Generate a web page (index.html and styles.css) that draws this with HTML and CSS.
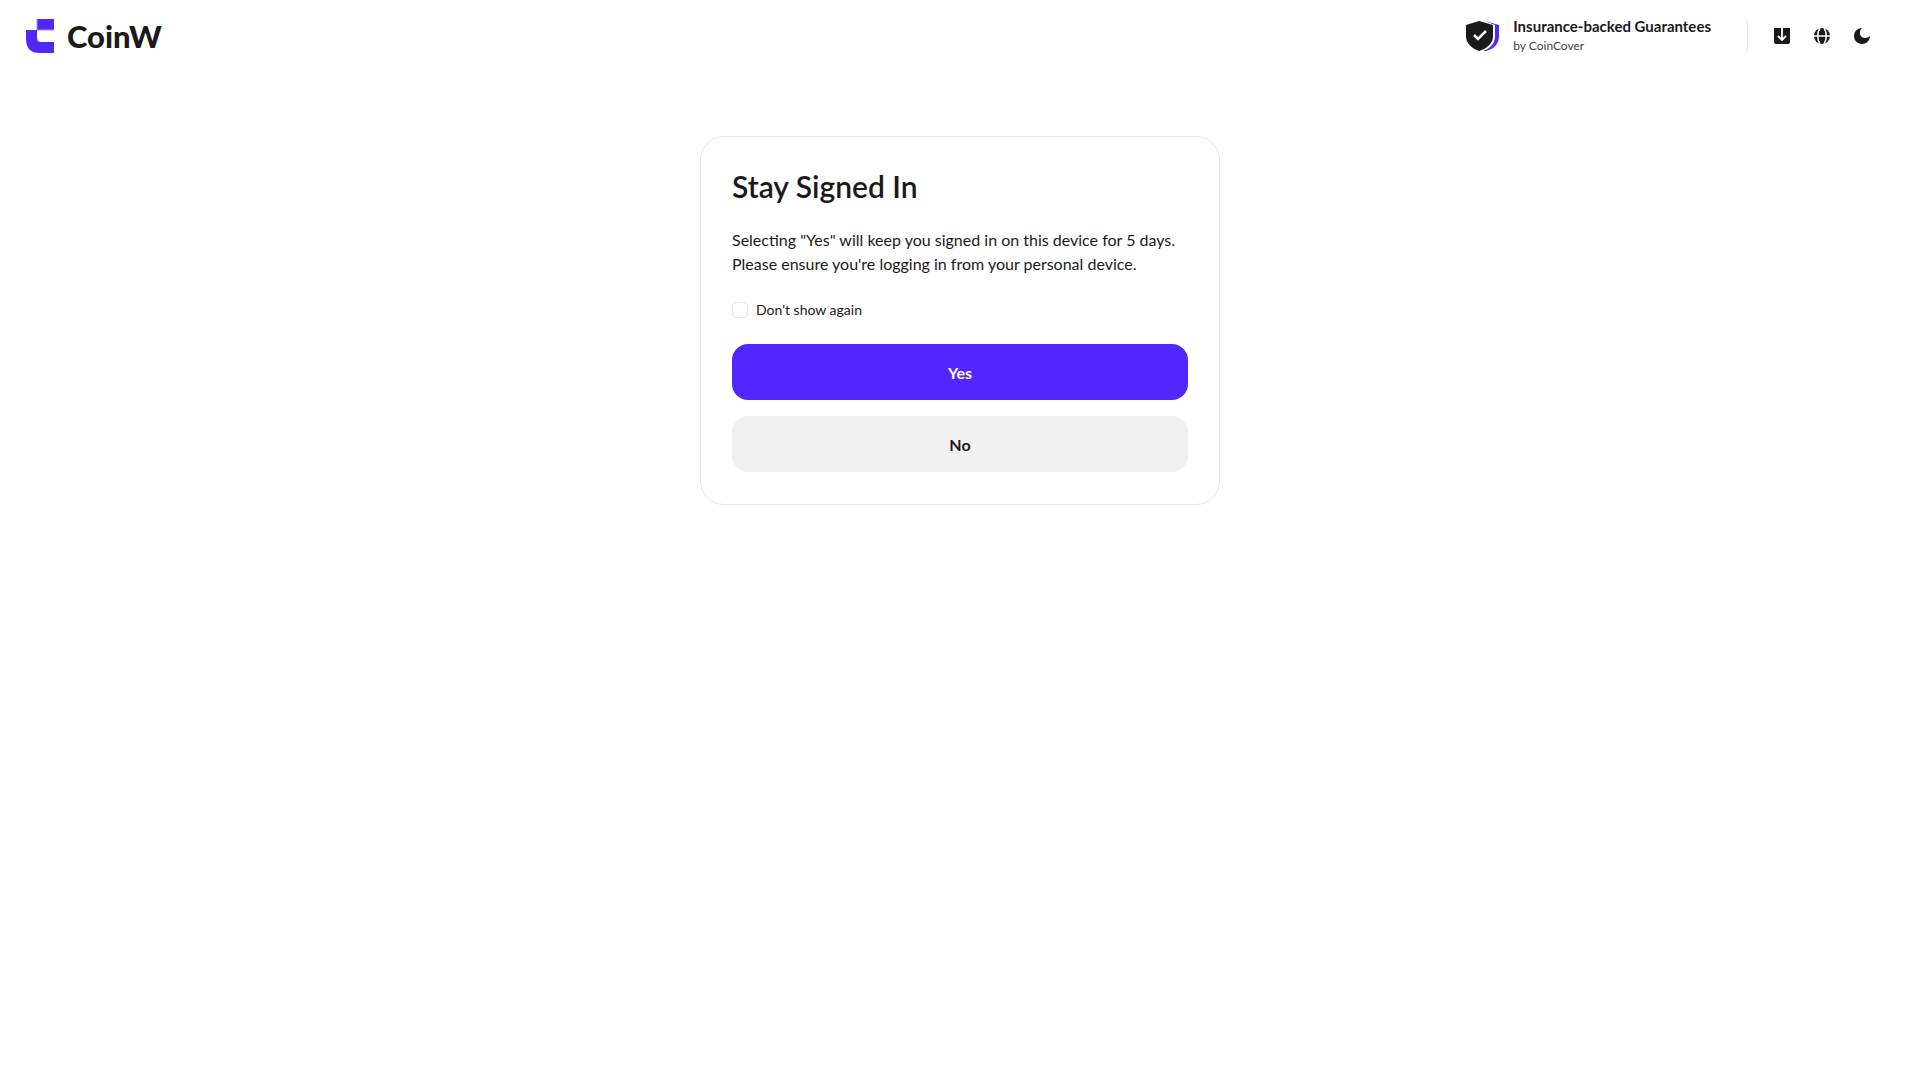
FILE: index.html
```html
<!DOCTYPE html>
<html lang="en">
<head>
    <meta charset="UTF-8">
    <meta name="viewport" content="width=device-width, initial-scale=1.0">
    <title>Stay Signed In | CoinW</title>
    <link rel="stylesheet" href="styles.css">
</head>
<body>
    <header class="header">
        <a href="#" class="logo">
            <svg class="logo-mark" width="28" height="34" viewBox="0 0 28 34" aria-hidden="true">
                <path fill="#5227ff" d="M11 0h17v11H11z"/>
                <path fill="#5227ff" d="M0 11h11v8q0 4 4 4h13v11H14Q0 34 0 20z"/>
                <path stroke="#a48fff" stroke-width="1" fill="none" d="M11 0v11h17"/>
            </svg>
            <span class="logo-text">CoinW</span>
        </a>
        <div class="header-right">
            <a href="#" class="cover">
                <svg width="34" height="32" viewBox="0 0 34 32" aria-hidden="true">
                    <path fill="#5227ff" d="M19 1l14 4v11c0 8-5 13-13 15h-3c8-3 12-8 12-15V5z"/>
                    <path fill="#1a1a1a" d="M13 1l14 4v11c0 7-5 12-14 15C5 28 0 23 0 16V5z"/>
                    <path fill="none" stroke="#fff" stroke-width="2.5" d="M8 15l4 4 8-8"/>
                </svg>
                <span class="cover-text">
                    <span class="cover-title">Insurance-backed Guarantees</span>
                    <span class="cover-sub">by CoinCover</span>
                </span>
            </a>
            <nav class="tools">
                <button type="button" class="tool" aria-label="Download app">
                    <svg width="16" height="16" viewBox="0 0 16 16">
                        <path fill="#1a1a1a" d="M0 0h16v14q0 2-2 2H2q-2 0-2-2z"/>
                        <path fill="none" stroke="#fff" stroke-width="1.8" d="M8 0v12M4 8l4 4 4-4"/>
                    </svg>
                </button>
                <button type="button" class="tool" aria-label="Language">
                    <svg width="16" height="16" viewBox="0 0 16 16">
                        <circle cx="8" cy="8" r="8" fill="#1a1a1a"/>
                        <path fill="none" stroke="#fff" stroke-width="1.5" d="M0 8h16M6 0C3 4 3 12 6 16M10 0c3 4 3 12 0 16"/>
                    </svg>
                </button>
                <button type="button" class="tool" aria-label="Dark mode">
                    <svg width="16" height="16" viewBox="0 0 16 16">
                        <path fill="#1a1a1a" d="M8 0C4 4 6 10 11 10q3 0 5-2C16 12 13 16 8 16S0 12 0 8s3-8 8-8z"/>
                    </svg>
                </button>
            </nav>
        </div>
    </header>

    <main class="main">
        <form class="card">
            <h1>Stay Signed In</h1>
            <p>Selecting "Yes" will keep you signed in on this device for 5 days.<br>
            Please ensure you're logging in from your personal device.</p>
            <label class="remember" for="dontShow">
                <input type="checkbox" id="dontShow">
                Don't show again
            </label>
            <button type="button" class="btn btn-primary">Yes</button>
            <button type="button" class="btn btn-secondary">No</button>
        </form>
    </main>
</body>
</html>
```
FILE: styles.css
```css
* {
    box-sizing: border-box;
}
body {
    margin: 0;
    font-family: Lato, "Liberation Sans", sans-serif;
    color: #1a1a1a;
    background-color: #fff;
}
a {
    color: inherit;
    text-decoration: none;
}
svg {
    display: block;
}
button {
    border: none;
    font-family: inherit;
    color: inherit;
    cursor: pointer;
}
.header {
    display: flex;
    align-items: center;
    justify-content: space-between;
    height: 72px;
    padding: 0 50px 0 26px;
}
.logo {
    display: flex;
    align-items: center;
    gap: 13px;
}
.logo-text {
    font-size: 31px;
    line-height: 32px;
    font-weight: 900;
}
.header-right {
    display: flex;
    align-items: center;
    gap: 36px;
}
.cover {
    display: flex;
    align-items: center;
    gap: 13px;
}
.cover-text {
    display: flex;
    flex-direction: column;
}
.cover-title {
    font-size: 15px;
    line-height: 20px;
    font-weight: 700;
}
.cover-sub {
    font-size: 12px;
    line-height: 20px;
    color: #444;
}
/* Download, language and theme icons */
.tools {
    display: flex;
    align-items: center;
    gap: 24px;
    height: 32px;
    padding-left: 26px;
    border-left: 1px solid #e6e6e6;
}
.tool {
    padding: 0;
    background: none;
}
.main {
    display: flex;
    justify-content: center;
    padding: 64px 16px;
}
.card {
    display: flex;
    flex-direction: column;
    width: 100%;
    max-width: 520px;
    padding: 31px 31px 32px;
    border: 1px solid #e6e6e6;
    border-radius: 24px;
}
h1 {
    margin: 0 0 24px;
    font-size: 30px;
    line-height: 36px;
    font-weight: 600;
}
p {
    margin: 0 0 24px;
    font-size: 16px;
    line-height: 24px;
}
.remember {
    display: flex;
    align-items: center;
    gap: 8px;
    margin-bottom: 24px;
    font-size: 14px;
    line-height: 20px;
    cursor: pointer;
}
.remember input {
    appearance: none;
    width: 16px;
    height: 16px;
    margin: 0;
    border: 1px solid #e6e6e6;
    border-radius: 4px;
}
.remember input:checked {
    background-color: #5227ff;
}
.btn {
    height: 56px;
    border-radius: 16px;
    font-size: 16px;
    font-weight: 700;
}
.btn-primary {
    margin-bottom: 16px;
    background-color: #5227ff;
    color: #fff;
}
.btn-secondary {
    background-color: #f1f1f1;
}
```
